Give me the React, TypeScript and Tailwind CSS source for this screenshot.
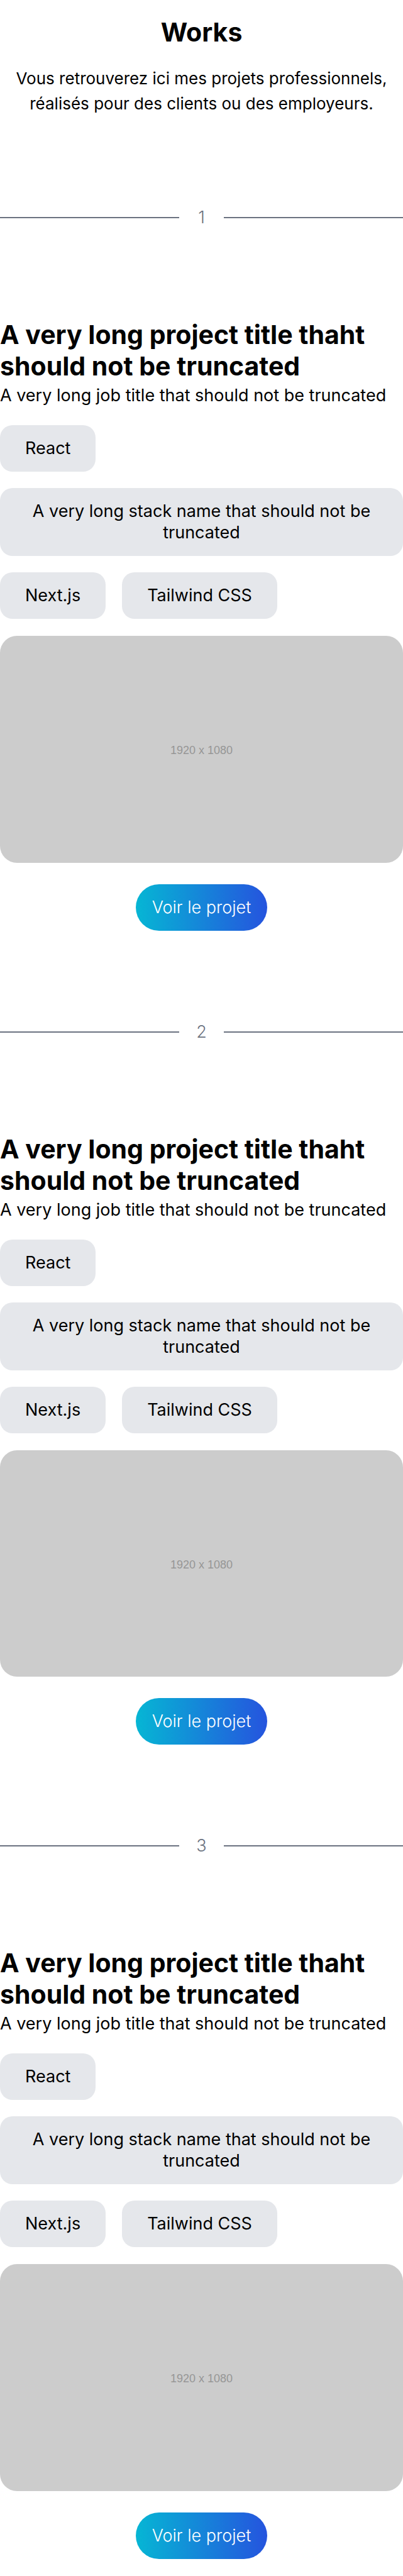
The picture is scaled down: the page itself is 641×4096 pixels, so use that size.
const projects = [1, 2, 3].map((id) => ({
  id,
  title: "A very long project title thaht should not be truncated",
  job: "A very long job title that should not be truncated",
  stack: ["React", "A very long stack name that should not be truncated", "Next.js", "Tailwind CSS"],
}));

type Project = (typeof projects)[number];

function Divider({ label }: { label: number }) {
  return (
    <div className="flex items-center justify-center text-[27px] leading-[40px] font-light text-[#6b7280]">
      <span className="h-[2px] flex-1 bg-[#6b7280]" />
      <span className="w-[71px] text-center">{label}</span>
      <span className="h-[2px] flex-1 bg-[#6b7280]" />
    </div>
  );
}

function ProjectCard({ project }: { project: Project }) {
  return (
    <article className="flex flex-col">
      <h2 className="text-[41px] leading-[50px] font-bold">{project.title}</h2>
      <p className="mt-[5px] text-[27px] leading-[34px]">{project.job}</p>
      <ul className="mt-[30px] flex flex-wrap gap-[26px]">
        {project.stack.map((name) => (
          <li
            key={name}
            className="rounded-[20px] bg-[#e5e7eb] px-[40px] py-[20px] text-center text-[27px] leading-[34px]"
          >
            {name}
          </li>
        ))}
      </ul>
      <div
        role="img"
        aria-label="1920 x 1080"
        className="mt-[27px] flex aspect-video w-full items-center justify-center rounded-[27px] bg-[#cccccc] pt-1 font-['Liberation_Sans',sans-serif] text-[18px] leading-[24px] text-[#969696]"
      >
        1920 x 1080
      </div>
      <a
        href="#projet"
        className="mt-[34px] self-center rounded-full bg-linear-to-r/srgb from-[#06b6d4] to-[#2554de] px-[26px] py-[17px] text-[27px] leading-[40px] font-light text-white"
      >
        Voir le projet
      </a>
    </article>
  );
}

export default function App() {
  return (
    <main className="bg-white py-[26px] font-['Inter',sans-serif] text-black">
      <header className="text-center">
        <h1 className="text-[41px] leading-[50px] font-bold">Works</h1>
        <p className="mt-[29px] text-[26px] leading-[40px]">
          Vous retrouverez ici mes projets professionnels, réalisés pour des clients ou des employeurs.
        </p>
      </header>
      {projects.map((project) => (
        <section key={project.id} className="mt-[141px] flex flex-col gap-[141px]">
          <Divider label={project.id} />
          <ProjectCard project={project} />
        </section>
      ))}
    </main>
  );
}
